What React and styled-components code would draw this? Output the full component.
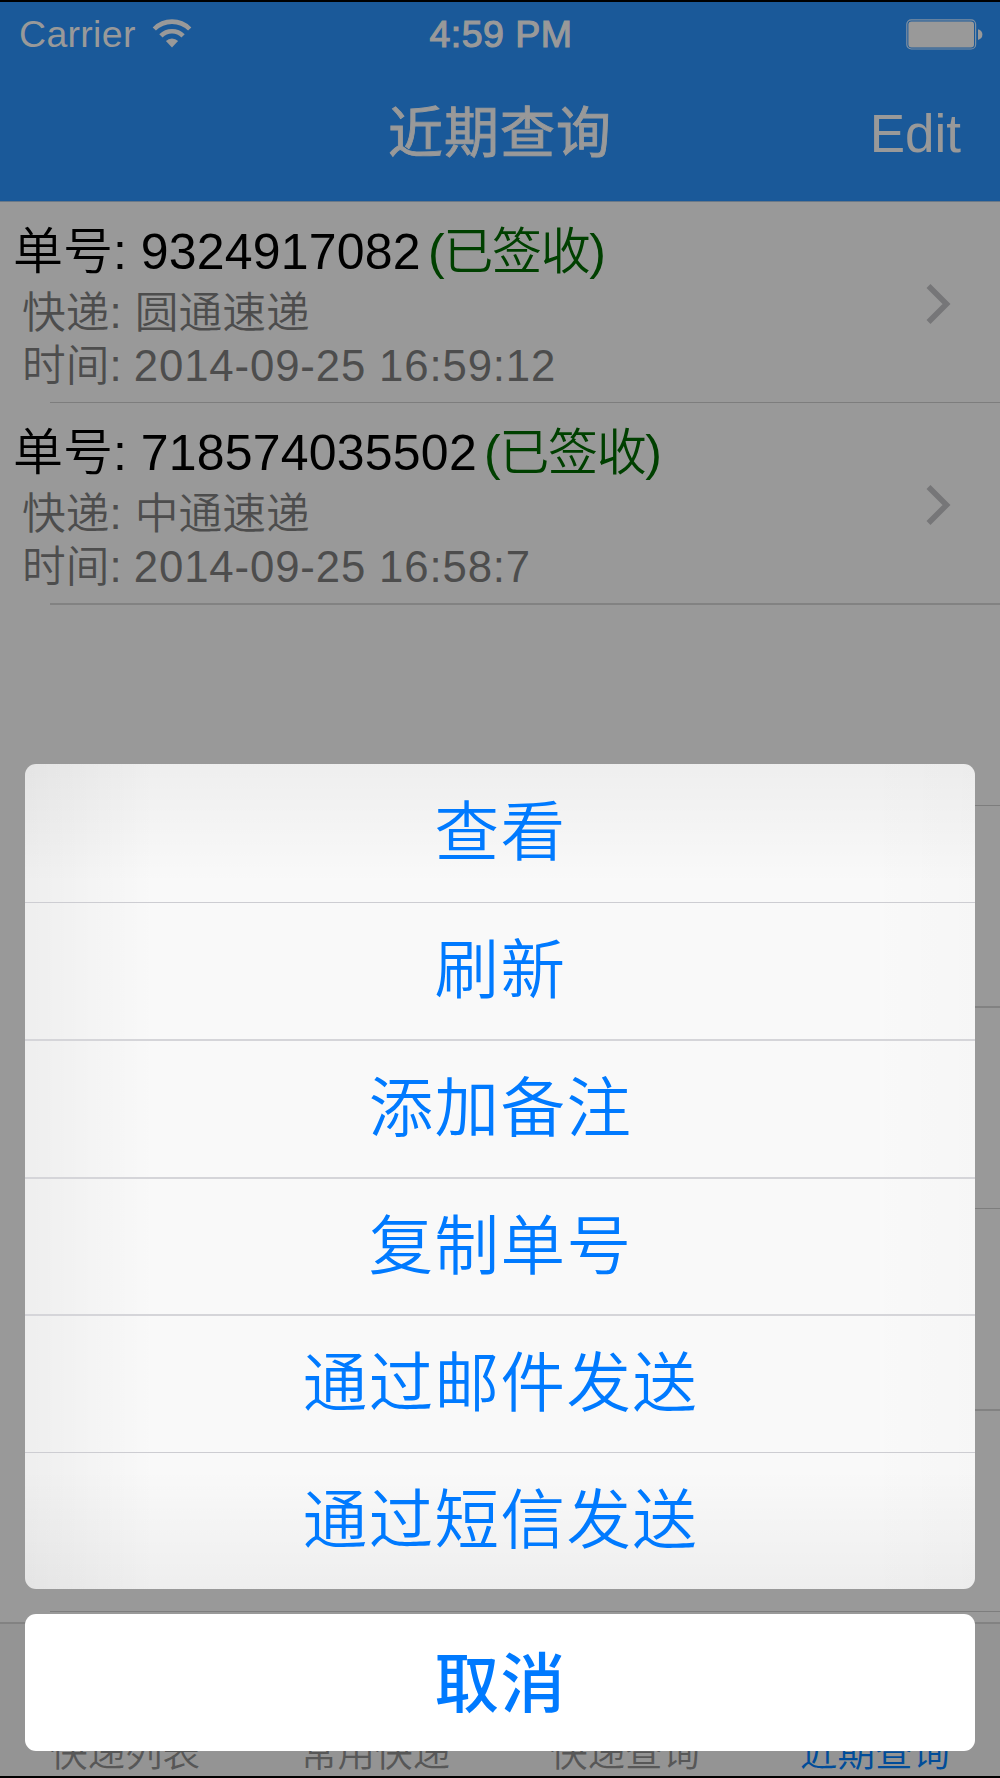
import styled, { createGlobalStyle } from "styled-components";

const records = [
    { id: "9324917082", company: "圆通速递", time: "2014-09-25 16:59:12" },
    { id: "718574035502", company: "中通速递", time: "2014-09-25 16:58:7" },
]

const actions = ["查看", "刷新", "添加备注", "复制单号", "通过邮件发送", "通过短信发送"]

const tabs = ["快递列表", "常用快递", "快递查询", "近期查询"]

export default function App() {
    return (
        <Screen>
            <GlobalStyle />
            <Header>
                <StatusBar>
                    <Carrier>
                        <span>Carrier</span>
                        <WifiIcon />
                    </Carrier>
                    <Clock>4:59 PM</Clock>
                    <BatteryIcon />
                </StatusBar>
                <NavBar>
                    <h1>近期查询</h1>
                    <Edit>Edit</Edit>
                </NavBar>
            </Header>
            <List>
                {records.map((value) => <Record key={value.id} value={value} />)}
                {[0, 1, 2, 3, 4].map((value) => <Row key={value} />)}
            </List>
            <TabBar>
                {tabs.map((value, index) => <Tab key={value} $active={index === 3}>{value}</Tab>)}
            </TabBar>
            <Sheet>
                <Actions>
                    {actions.map((value, index) => <Action key={value} $thin={index === 0 || index === 4}>{value}</Action>)}
                </Actions>
                <Cancel>取消</Cancel>
            </Sheet>
        </Screen>
    )
}

function Record({ value }) {
    return (
        <Row>
            <Info>
                <Title>单号: <Num>{value.id}</Num><Signed>(已签收)</Signed></Title>
                <Detail>快递: <Company>{value.company}</Company></Detail>
                <Detail>时间: <Time>{value.time}</Time></Detail>
            </Info>
            <svg width="26" height="42" viewBox="0 0 26 42" fill="none" stroke="#767678" strokeWidth="5.6">
                <path d="M2.5 3 L20.5 21 L2.5 39" />
            </svg>
        </Row>
    )
}

function WifiIcon() {
    return (
        <svg width="40" height="30" viewBox="0 0 40 30" fill="none" stroke="#999999" strokeWidth="4.6">
            <path d="M2.3 10 A25 25 0 0 1 37.7 10" />
            <path d="M8.9 16.9 A15.6 15.6 0 0 1 31.1 16.9" />
            <path d="M20 28.5 L13.9 22.1 A8.6 8.6 0 0 1 26.1 22.1 Z" fill="#999999" stroke="none" />
        </svg>
    )
}

function BatteryIcon() {
    return (
        <svg width="77" height="31" viewBox="0 0 77 31">
            <rect x="0.8" y="0.8" width="68.8" height="29.2" rx="4.5" fill="none" stroke="#7f90a2" strokeWidth="1.2" />
            <rect x="2.4" y="2.4" width="65.6" height="26" rx="3" fill="#999999" />
            <path d="M72 10.2 Q76.4 11.5 76.4 15.6 Q76.4 19.8 72 21 Z" fill="#999999" />
        </svg>
    )
}

const GlobalStyle = createGlobalStyle`
* {
    box-sizing: border-box;
}
body {
    margin: 0;
    background: #000000;
}
h1, p {
    margin: 0;
}
button {
    padding: 0;
    border: 0;
    background: none;
    font-family: inherit;
}
`

const Screen = styled.div`
position: relative;
width: 1000px;
height: 1778px;
overflow: hidden;

display: flex;
flex-direction: column;

border-top: 2px solid #000000;
border-bottom: 2px solid #000000;
background: #999999;
font-family: "Liberation Sans", "Noto Sans CJK SC", sans-serif;
font-weight: 350;
`

const Header = styled.header`
height: 200px;
flex-shrink: 0;

background: #1a5999;
color: #999999;
border-bottom: 1px solid #6a7988;
`

const StatusBar = styled.div`
height: 63px;
padding: 0 17px 0 19px;

display: grid;
grid-template-columns: 1fr auto 1fr;
align-items: center;

font-size: 37.5px;
line-height: 65px;

> svg {
    justify-self: end;
}
`

const Carrier = styled.div`
display: flex;
align-items: center;
gap: 16px;

letter-spacing: 0.3px;

svg {
    margin-top: -2px;
}
`

const Clock = styled.div`
letter-spacing: 0.5px;
-webkit-text-stroke: 1.2px #999999;
`

const NavBar = styled.div`
height: 136px;
padding: 0 39px;

display: grid;
grid-template-columns: 1fr auto 1fr;

h1 {
    grid-column: 2;
    font-size: 55px;
    font-weight: 400;
    letter-spacing: 1px;
    line-height: 136px;
    -webkit-text-stroke: 0.9px #999999;
}
`

const Edit = styled.button`
justify-self: end;
color: #999999;
font-size: 53px;
line-height: 137px;
`

const List = styled.div`
height: 1420px;
flex-shrink: 0;
overflow: hidden;
`

const Row = styled.div`
height: 201px;
padding: 15px 48px 0 13px;

display: flex;
justify-content: space-between;

background: linear-gradient(#7d7d7d, #7d7d7d) 50px 100% / 100% 1px no-repeat;

&:nth-child(even) {
    height: 202px;
    background: linear-gradient(#828282, #828282) 50px 100% / 100% 2px no-repeat;
}

> svg {
    margin-top: 66px;
}
`

const Info = styled.div`
white-space: pre;
`

const Title = styled.p`
color: #000000;
font-size: 50px;
line-height: 70px;
`

const Num = styled.span`
letter-spacing: 0.2px;
`

const Signed = styled.span`
margin-left: 7px;
color: #004000;
letter-spacing: -1.3px;
`

const Detail = styled.p`
padding-left: 9px;
color: #4d4d4d;
font-size: 43.75px;
line-height: 52.5px;
`

const Company = styled.span`
margin-left: 1px;
`

const Time = styled.span`
letter-spacing: 0.85px;
`

const TabBar = styled.nav`
height: 154px;
flex-shrink: 0;

display: grid;
grid-template-columns: repeat(4, 1fr);
align-items: end;

background: #949494;
border-top: 2px solid #828282;
`

const Tab = styled.div`
padding-bottom: 1px;
color: ${(props) => props.$active ? "#004c99" : "#575757"};
font-size: 37.5px;
line-height: 44px;
text-align: center;
`

const Sheet = styled.div`
position: absolute;
left: 25px;
right: 25px;
top: 762px;

display: flex;
flex-direction: column;
gap: 25px;
`

const Actions = styled.div`
display: grid;
grid-template-rows: 139px 138px 138px 137px 137px 136px;

border-radius: 11px;
overflow: hidden;
background:
    linear-gradient(to right, rgba(0, 0, 0, 0.045), rgba(0, 0, 0, 0) 130px),
    linear-gradient(to left, rgba(0, 0, 0, 0.012), rgba(0, 0, 0, 0) 110px),
    linear-gradient(to bottom, rgba(0, 0, 0, 0.045), rgba(0, 0, 0, 0) 120px),
    linear-gradient(to top, rgba(0, 0, 0, 0.045), rgba(0, 0, 0, 0) 120px),
    #f9f9f9;
`

const Action = styled.button`
padding-left: 1px;
color: #007aff;
font-size: 64.5px;
font-weight: 350;
letter-spacing: 1.4px;
line-height: 132px;
border-bottom: ${(props) => props.$thin ? "1px solid #cdcdd2" : "2px solid #d5d5d9"};

&:last-child {
    border-bottom: 0;
}
`

const Cancel = styled.button`
height: 137px;
padding: 4px 0 0 1px;
border-radius: 11px;
background: #ffffff;
color: #007aff;
font-size: 64.5px;
font-weight: 500;
letter-spacing: 1.4px;
line-height: 132px;
`
